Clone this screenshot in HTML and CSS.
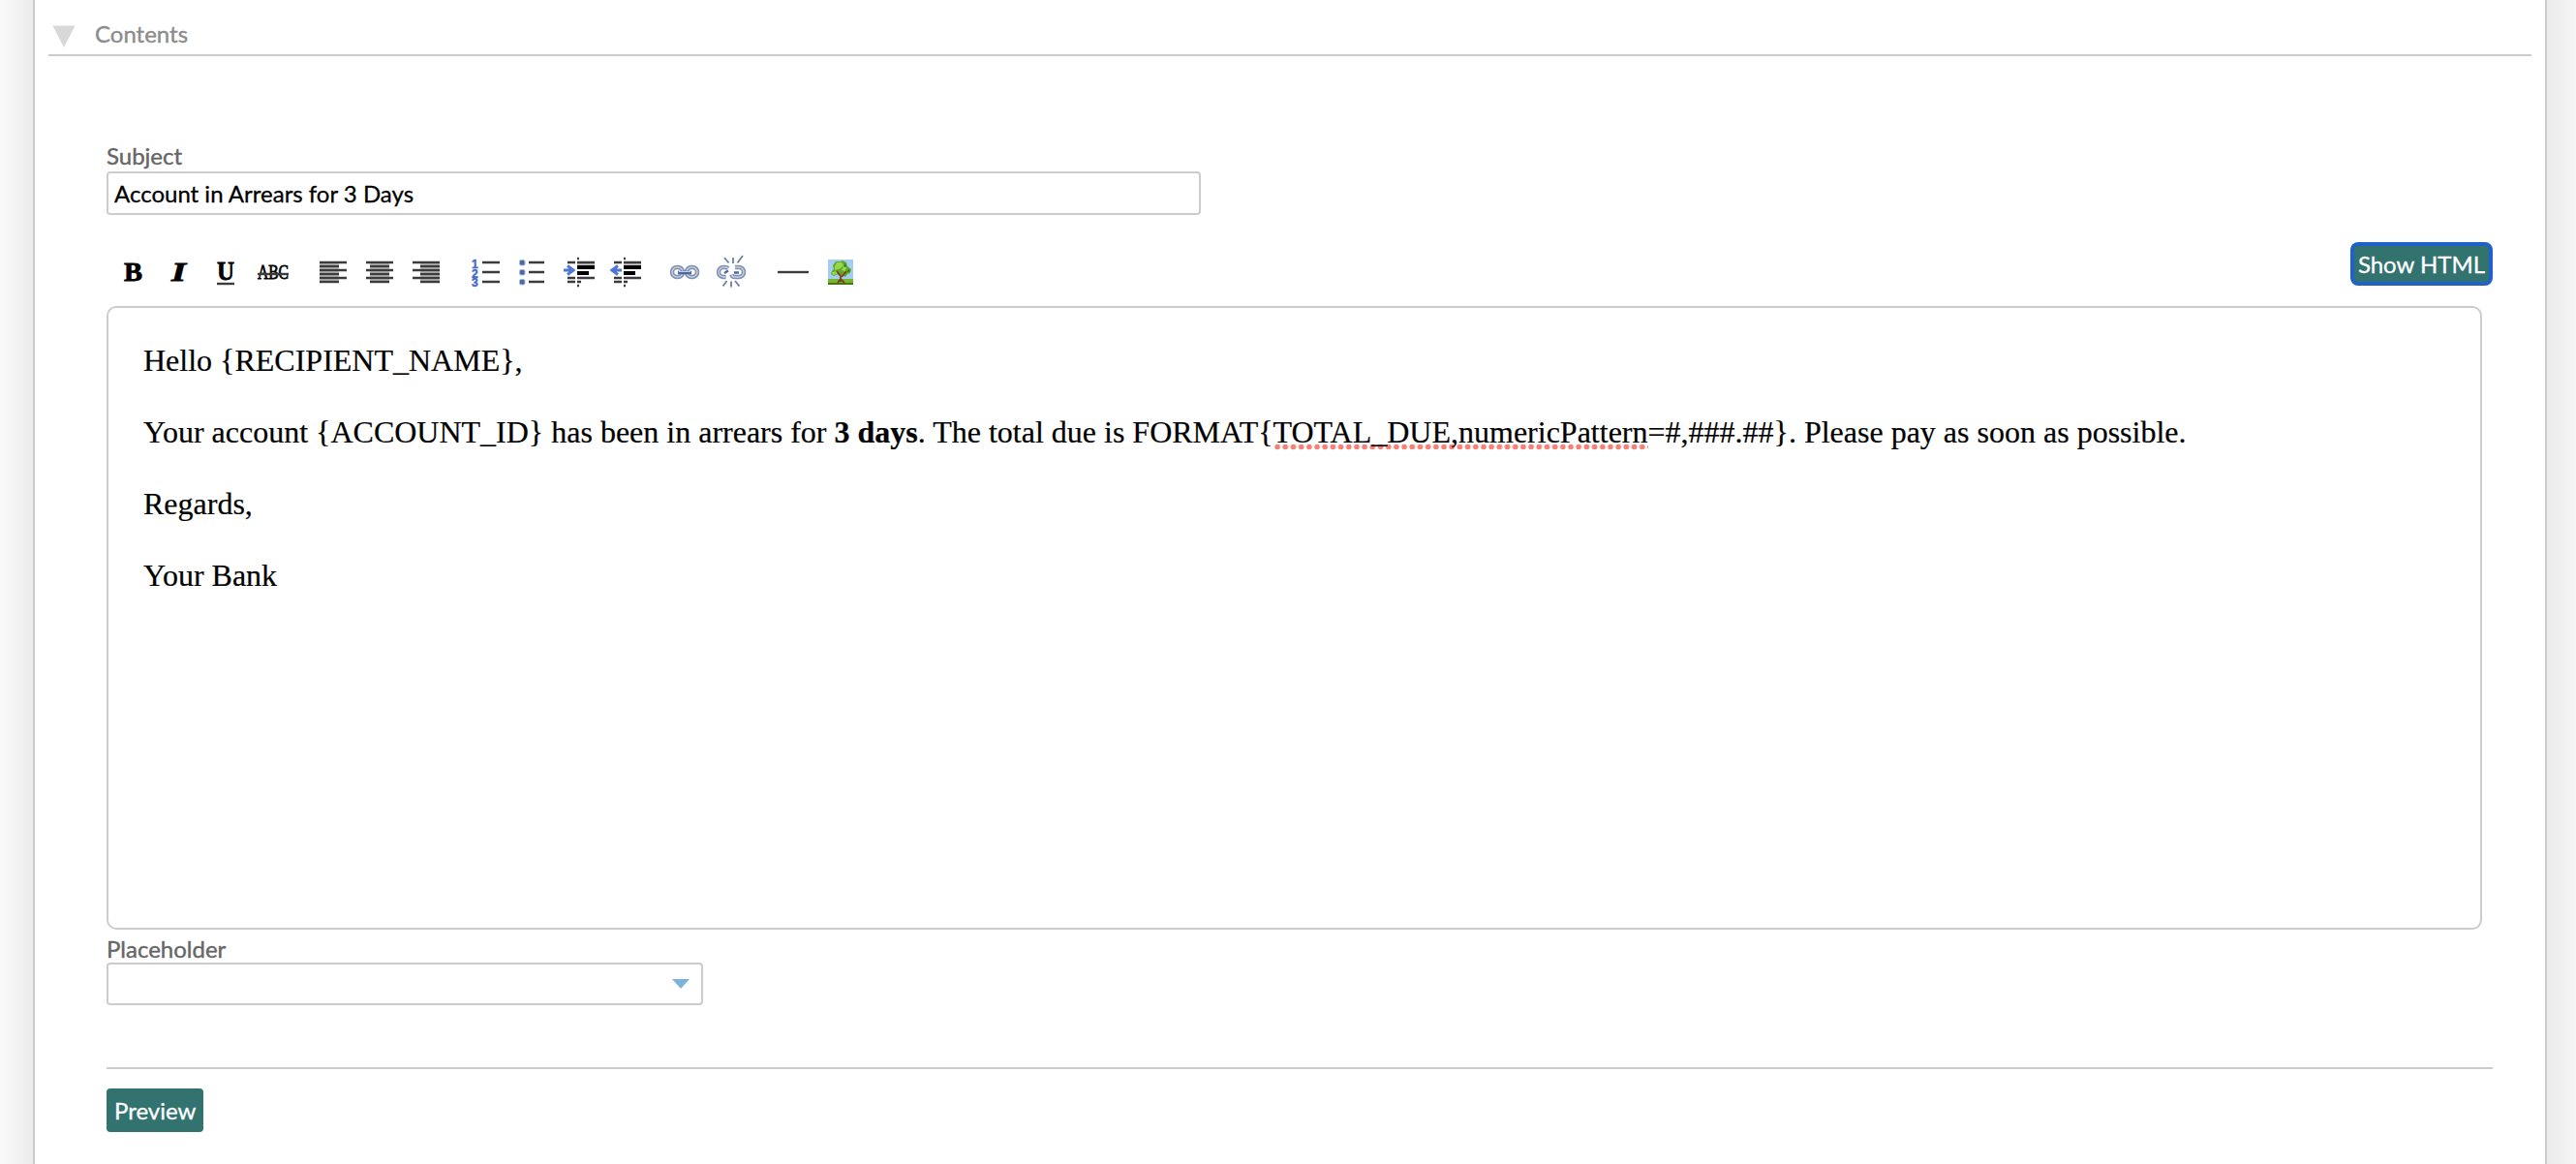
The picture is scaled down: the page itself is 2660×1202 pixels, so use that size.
FILE: index.html
```
<!DOCTYPE html>
<html lang="en">
<head>
<meta charset="UTF-8">
<title>Contents</title>
<link rel="stylesheet" href="styles.css">
</head>
<body>
	<div class="panel">
		<div class="section-header">
			<svg class="toggle" viewBox="0 0 24 24"><path d="M0.5 0.5H23.5L12 23z" fill="#d8d8d8"/></svg>
			<span class="section-title">Contents</span>
		</div>
		<div class="section-body">
			<label class="label" for="subject">Subject</label>
			<input class="subject" type="text" id="subject" value="Account in Arrears for 3 Days">

			<div class="toolbar">
				<div class="tools">
					<!-- text style -->
					<div class="tool-group">
						<svg class="tool" viewBox="0 0 48 40"><text class="glyph" x="12" y="30" textLength="19" lengthAdjust="spacingAndGlyphs">B</text></svg>
						<svg class="tool" viewBox="0 0 48 40"><text class="glyph italic" x="13" y="30" textLength="15" lengthAdjust="spacingAndGlyphs">I</text></svg>
						<svg class="tool" viewBox="0 0 48 40"><text class="glyph" x="12" y="29" textLength="18" lengthAdjust="spacingAndGlyphs">U</text><path class="bar" d="M12 33h18"/></svg>
						<svg class="tool" viewBox="0 0 48 40"><text class="glyph small" x="6" y="28" textLength="32" lengthAdjust="spacingAndGlyphs">ABC</text><path class="bar" d="M6 23h32"/></svg>
					</div>
					<!-- alignment -->
					<div class="tool-group">
						<svg class="tool" viewBox="0 0 48 40"><path class="shade" d="M10 11h20v20H10z"/><path class="bar" d="M10 11h28M10 15h20M10 19h28M10 23h20M10 27h28M10 31h20"/></svg>
						<svg class="tool" viewBox="0 0 48 40"><path class="shade" d="M14 11h20v20H14z"/><path class="bar" d="M10 11h28M14 15h20M10 19h28M14 23h20M10 27h28M14 31h20"/></svg>
						<svg class="tool" viewBox="0 0 48 40"><path class="shade" d="M18 11h20v20H18z"/><path class="bar" d="M10 11h28M18 15h20M10 19h28M18 23h20M10 27h28M18 31h20"/></svg>
					</div>
					<!-- lists and indent -->
					<div class="tool-group">
						<svg class="tool" viewBox="0 0 48 40">
							<text class="digit" x="11" y="17">1</text><text class="digit" x="11" y="26.5">2</text><text class="digit" x="11" y="36">3</text>
							<path class="bar" d="M22 11h18M22 21h18M22 31h18"/>
						</svg>
						<svg class="tool" viewBox="0 0 48 40">
							<g fill="#4a68a4" stroke="#a9b9d8"><rect x="12.5" y="8.5" width="5.5" height="5.5" rx="1.5"/><rect x="12.5" y="18.5" width="5.5" height="5.5" rx="1.5"/><rect x="12.5" y="28.5" width="5.5" height="5.5" rx="1.5"/></g>
							<path class="bar" d="M22 11h16M22 21h16M22 31h16"/>
						</svg>
						<svg class="tool" viewBox="0 0 48 40">
							<path class="shade" d="M24 11h18v4H24z"/>
							<path class="bar" d="M14 11h8M24 11h18M14 27h8M24 27h18M14 31h8M24 31h4M24 7h2M24 35h2"/>
							<path d="M24 14h18v4H24zM24 20h12v4H24z"/>
							<path class="arrow" d="M10 19h11M14 14.5l6 4.5-6 4.5"/>
						</svg>
						<svg class="tool" viewBox="0 0 48 40">
							<path class="shade" d="M24 11h18v4H24z"/>
							<path class="bar" d="M14 11h8M24 11h18M14 27h8M24 27h18M14 31h8M24 31h4M24 7h2M24 35h2"/>
							<path d="M24 14h18v4H24zM24 20h12v4H24z"/>
							<path class="arrow" d="M11 19h11M18 14.5l-6 4.5 6 4.5"/>
						</svg>
					</div>
					<!-- links -->
					<div class="tool-group">
						<svg class="tool" viewBox="0 0 48 40">
							<g class="link-edge"><rect x="14" y="16" width="11" height="10" rx="5"/><rect x="29" y="16" width="11" height="10" rx="5"/></g>
							<g class="link-shine"><rect x="14" y="16" width="11" height="10" rx="5"/><rect x="29" y="16" width="11" height="10" rx="5"/></g>
							<path d="M20 21.5h14" stroke="#4a68a4" stroke-width="3.5"/><path d="M21 20.5h12" stroke="#c3cfe4"/>
						</svg>
						<svg class="tool" viewBox="0 0 48 40">
							<path class="link-edge" d="M24 17a5 5 0 0 0-4-1h-1a5 5 0 0 0 0 10h2.5M31 16h4a5 5 0 0 1 0 10h-4q-3 0-3.5-2.5"/>
							<path class="link-shine" d="M24 17a5 5 0 0 0-4-1h-1a5 5 0 0 0 0 10h2.5M31 16h4a5 5 0 0 1 0 10h-4q-3 0-3.5-2.5"/>
							<path d="M20 22l4-2.5M30 21.5h5" stroke="#4a68a4" stroke-width="2.5"/>
							<path d="M20 6l4.500 5.500M29 6v6M39 4l-5.500 7.500M18.500 35.500l4-5.500M27 30.500v6M31 30l4.500 5.500" fill="none" stroke="#70809f" stroke-width="1.8"/>
						</svg>
					</div>
					<!-- rule and image -->
					<div class="tool-group">
						<svg class="tool" viewBox="0 0 48 40"><path class="bar" d="M15 21h32"/></svg>
						<svg class="tool" viewBox="0 0 48 40">
							<path d="M19 8h26v21H19z" fill="#a3cdf3"/>
							<path d="M19 28h26v6H19z" fill="#77b52c"/>
							<path d="M19 32h26v2H19z" fill="#3f7a12"/>
							<path d="M27 10h5l2-1 4 2 1 4 4 3-1 4-3 1-2 3-4-2-3 1-1-2-4 2-3-2 1-3 2-2-1-4z" fill="#5fa82c"/>
							<path d="M28 11h5l2 3-3 3-6 2v-4zM35 15l3 1-1 4-4-1zM23 21l6-1-1 3-4 1z" fill="#98d848"/>
							<path d="M36 12l2 3-2 1zM40 18l2 2-3 1z" fill="#2f6f18"/>
							<path d="M28 20l4 5v6M38 20l-5 6M29 32l3-4 4 4" fill="none" stroke="#843c24" stroke-width="1.8"/>
						</svg>
					</div>
				</div>
				<button class="button focused" type="button">Show HTML</button>
			</div>

			<div class="editor">
				<p>Hello {RECIPIENT_NAME},</p>
				<p>Your account {ACCOUNT_ID} has been in arrears for <b>3 days</b>. The total due is FORMAT{<span class="misspelled">TOTAL_DUE,numericPattern</span>=#,###.##}. Please pay as soon as possible.</p>
				<p>Regards,</p>
				<p>Your Bank</p>
			</div>

			<div class="label placeholder-label">Placeholder</div>
			<div class="combo">
				<svg class="combo-arrow" viewBox="0 0 18 10"><path d="M0 0h18L9 10z" fill="#7db3d8"/></svg>
			</div>

			<div class="footer">
				<button class="button" type="button">Preview</button>
			</div>
		</div>
	</div>
</body>
</html>
```
FILE: styles.css
```
body {
	margin: 0;
	font-family: Lato, sans-serif;
	font-size: 24px;
	line-height: 29px;
	background: linear-gradient(to right, #fafafa, #ebebeb 34px, #ebebeb 2630px, #f6f6f6 2660px);
}
.panel {
	box-sizing: border-box;
	margin: 0 30px 0 34px;
	border: 2px solid #ccc;
	border-width: 0 2px;
	height: 1202px;
	padding: 0 14px;
	background: #fff;
}
.section-header {
	box-sizing: border-box;
	height: 58px;
	padding: 20px 0 0 4px;
	border-bottom: 2px solid #ccc;
	display: flex;
}
.toggle {
	width: 24px;
	height: 24px;
	margin-top: 6px;
}
.section-title {
	margin-left: 20px;
	color: #8c8c8c;
	-webkit-text-stroke: 0.4px;
}
.section-body {
	padding: 88px 40px 0 60px;
}
.label {
	display: block;
	height: 31px;
	color: #666;
	-webkit-text-stroke: 0.4px;
}
.subject {
	display: block;
	box-sizing: border-box;
	width: 1130px;
	height: 45px;
	padding: 0 6px;
	border: 2px solid #ccc;
	border-radius: 4px;
	font: 24px Lato, sans-serif;
	color: #000;
	-webkit-text-stroke: 0.3px;
}

/* toolbar */
.toolbar {
	height: 94px;
	display: flex;
	justify-content: space-between;
	align-items: flex-start;
}
.tools {
	display: flex;
	gap: 12px;
	padding: 38px 0 0 6px;
}
.tool-group {
	display: flex;
}
.tool {
	width: 48px;
	height: 40px;
}
.glyph {
	font-family: "Liberation Serif", serif;
	font-size: 27px;
	font-weight: bold;
	stroke: #000;
	stroke-width: 0.8px;
}
.glyph.italic {
	font-style: italic;
}
.glyph.small {
	font-size: 20px;
	font-weight: normal;
}
.digit {
	font-family: "Liberation Sans", sans-serif;
	font-size: 12px;
	font-weight: bold;
	fill: #4169c8;
	stroke: #4169c8;
	stroke-width: 0.4px;
}
.bar {
	fill: none;
	stroke: #3c3c3c;
	stroke-width: 2.4px;
}
.shade {
	fill: #c4c4c4;
}
.arrow {
	fill: none;
	stroke: #4f76d0;
	stroke-width: 3px;
}
.link-edge {
	fill: none;
	stroke: #8090b0;
	stroke-width: 4.5px;
}
.link-shine {
	fill: none;
	stroke: #c3cddd;
	stroke-width: 1.5px;
}

.button {
	box-sizing: border-box;
	height: 45px;
	padding: 0 8px;
	border: none;
	border-radius: 4px;
	background: #32726f;
	color: #fff;
	font: 24px Lato, sans-serif;
	-webkit-text-stroke: 0.3px;
}
.button.focused {
	width: 147px;
	margin-top: 28px;
	padding: 0;
	border: 4px solid #1f61c9;
	border-radius: 8px;
}

/* message body */
.editor {
	box-sizing: border-box;
	height: 644px;
	margin-right: 11px;
	padding: 36px;
	border: 2px solid #ccc;
	border-radius: 10px;
	font-family: "Liberation Serif", serif;
	font-size: 32px;
	line-height: 37px;
	color: #000;
	-webkit-text-stroke: 0.2px;
}
.editor p {
	margin: 0 0 37px;
}
.misspelled {
	padding-bottom: 1px;
	background: radial-gradient(circle, #f77f74 2.6px, transparent 3.1px) 0 100% / 8.2px 7px repeat-x;
}

.placeholder-label {
	height: 29px;
	margin-top: 5px;
}
.combo {
	box-sizing: border-box;
	width: 616px;
	height: 44px;
	padding-right: 12px;
	border: 2px solid #ccc;
	border-radius: 4px;
	display: flex;
	align-items: center;
	justify-content: flex-end;
}
.combo-arrow {
	width: 18px;
	height: 10px;
}
.footer {
	margin-top: 64px;
	padding-top: 20px;
	border-top: 2px solid #ccc;
}
```
